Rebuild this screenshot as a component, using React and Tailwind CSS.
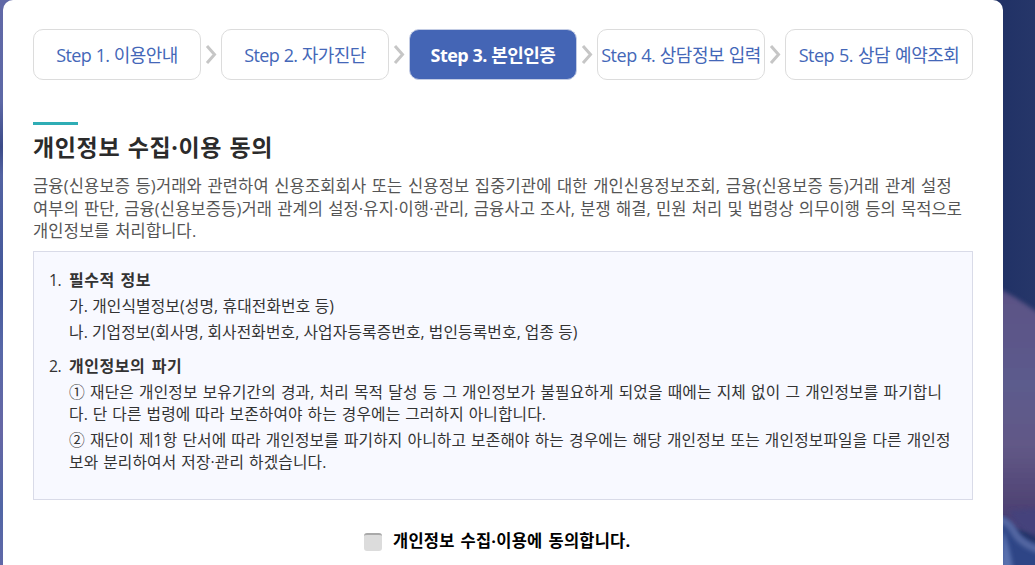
import React, { useState } from 'react';

const steps = [
  { id: 1, label: 'Step 1. 이용안내', width: 'w-[168px]', spacing: 'tracking-[-0.6px] [word-spacing:0.3px]' },
  { id: 2, label: 'Step 2. 자가진단', width: 'w-[168px]', spacing: 'tracking-[-0.6px] [word-spacing:0.3px]' },
  { id: 3, label: 'Step 3. 본인인증', width: 'w-[168px]', spacing: 'tracking-[-0.55px] [word-spacing:0.3px]' },
  { id: 4, label: 'Step 4. 상담정보 입력', width: 'w-[168px]', spacing: 'tracking-[-0.5px] [word-spacing:0.4px]' },
  { id: 5, label: 'Step 5. 상담 예약조회', width: 'w-[188px]', spacing: 'tracking-[-0.5px] [word-spacing:0.8px]' },
];

// 단계 사이 화살표
const StepArrow = () => (
  <svg className="w-5 h-[51px] shrink-0" viewBox="0 0 20 51" fill="none">
    <path d="M6 17 L13.5 25.5 L6 34" stroke="#c6c6c6" strokeWidth="3" />
  </svg>
);

// 상단 단계 표시
const StepBar = ({ current }) => (
  <ol className="flex">
    {steps.map((step) => (
      <li key={step.id} className="flex">
        {step.id > 1 && <StepArrow />}
        <div
          className={`${step.width} ${step.spacing} h-[51px] flex items-center justify-center rounded-[10px] border text-lg whitespace-nowrap ${
            step.id === current
              ? 'bg-[#4465b5] border-[#c3cce4] text-white font-bold'
              : 'bg-white border-[#dcdcdc] text-[#4467b8]'
          }`}
        >
          {step.label}
        </div>
      </li>
    ))}
  </ol>
);

// 본문 배경
const Background = () => (
  <svg className="absolute inset-0 w-full h-full" viewBox="0 0 1035 565" preserveAspectRatio="none">
    <defs>
      <linearGradient id="left" x1="0" y1="0" x2="0" y2="1">
        <stop offset="0" stopColor="#6169a7" />
        <stop offset="0.18" stopColor="#5d68a6" />
        <stop offset="0.26" stopColor="#3c4b88" />
        <stop offset="0.31" stopColor="#5363a2" />
        <stop offset="0.5" stopColor="#44589a" />
        <stop offset="0.62" stopColor="#5868a8" />
        <stop offset="0.76" stopColor="#6667a5" />
        <stop offset="0.9" stopColor="#5166a5" />
        <stop offset="1" stopColor="#6068a8" />
      </linearGradient>
      <linearGradient id="right" x1="0" y1="0" x2="1" y2="0">
        <stop offset="0" stopColor="#1d2f64" />
        <stop offset="1" stopColor="#263669" />
      </linearGradient>
      <linearGradient id="blob" x1="0" y1="0" x2="0" y2="1">
        <stop offset="0" stopColor="#5c5285" />
        <stop offset="0.4" stopColor="#5c5b8d" />
        <stop offset="0.65" stopColor="#625987" />
        <stop offset="0.9" stopColor="#4f4374" />
        <stop offset="1" stopColor="#453f77" />
      </linearGradient>
      <filter id="soft">
        <feGaussianBlur stdDeviation="2" />
      </filter>
    </defs>
    <rect width="20" height="565" fill="url(#left)" />
    <rect x="980" width="55" height="565" fill="url(#right)" />
    <path d="M990 285 Q1015 295 1045 318 V530 H990 Z" fill="url(#blob)" filter="url(#soft)" />
    <path d="M990 518 Q1003 514 1010 524 Q1022 542 1045 546 V580 H990 Z" fill="#2f4486" filter="url(#soft)" />
    <path d="M1010 511 Q1018 534 1045 538 V508 Z" fill="#44427c" filter="url(#soft)" />
    <path d="M996 519 Q1008 519 1016 535 Q1024 546 1045 552" stroke="#5468a3" strokeWidth="7" fill="none" filter="url(#soft)" />
    <path d="M1014 575 Q1010 545 1003 530 L1000 575 Z" fill="#5870ad" filter="url(#soft)" />
  </svg>
);

function App() {
  const [agreed, setAgreed] = useState(false);

  return (
    <div className="relative h-[565px] overflow-hidden bg-[#1f3166] font-['Open_Sans','Noto_Sans_CJK_KR',sans-serif]">
      <Background />

      <main className="relative ml-[3px] w-[1000px] h-full rounded-t-[10px] bg-white px-[30px] pt-[29px]">
        <StepBar current={3} />

        {/* 제목 */}
        <div className="mt-[42px] w-[45px] h-[3px] bg-[#2fadb5]" />
        <h2 className="mt-[6px] h-[32px] leading-[32px] text-[23px] font-bold tracking-[0.65px] [word-spacing:0.8px] text-[#2b2b2b] whitespace-nowrap">
          개인정보 수집·이용 동의
        </h2>

        <div className="mt-3 text-[16.5px] leading-[22.5px] text-[#555] whitespace-nowrap">
          <p className="tracking-[0.15px] [word-spacing:1.1px]">금융(신용보증 등)거래와 관련하여 신용조회회사 또는 신용정보 집중기관에 대한 개인신용정보조회, 금융(신용보증 등)거래 관계 설정</p>
          <p className="tracking-[0.15px] [word-spacing:0.6px]">여부의 판단, 금융(신용보증등)거래 관계의 설정·유지·이행·관리, 금융사고 조사, 분쟁 해결, 민원 처리 및 법령상 의무이행 등의 목적으로</p>
          <p className="tracking-[0.15px] [word-spacing:1.2px]">개인정보를 처리합니다.</p>
        </div>

        {/* 약관 내용 */}
        <section className="mt-[8px] w-[940px] h-[249px] border border-[#d9dbe8] bg-[#f8f9ff] pl-[15px] pt-[17px] text-[15.75px] leading-[22px] tracking-[0.15px] text-[#333] whitespace-nowrap">
          <div className="flex">
            <span className="w-5 tracking-[-0.4px]">1.</span>
            <div>
              <h3 className="text-base leading-[22px] font-bold tracking-[0.5px] [word-spacing:1.2px]">필수적 정보</h3>
              <p className="mt-1">가. 개인식별정보(성명, 휴대전화번호 등)</p>
              <p className="mt-1 [word-spacing:-0.25px]">나. 기업정보(회사명, 회사전화번호, 사업자등록증번호, 법인등록번호, 업종 등)</p>
            </div>
          </div>
          <div className="flex mt-3">
            <span className="w-5 tracking-[-0.4px]">2.</span>
            <div>
              <h3 className="text-base leading-[22px] font-bold tracking-[0.5px] [word-spacing:2px]">개인정보의 파기</h3>
              <p className="mt-1 [word-spacing:0.85px]">① 재단은 개인정보 보유기간의 경과, 처리 목적 달성 등 그 개인정보가 불필요하게 되었을 때에는 지체 없이 그 개인정보를 파기합니</p>
              <p className="[word-spacing:0.65px]">다. 단 다른 법령에 따라 보존하여야 하는 경우에는 그러하지 아니합니다.</p>
              <p className="mt-1 [word-spacing:0.8px]">② 재단이 제1항 단서에 따라 개인정보를 파기하지 아니하고 보존해야 하는 경우에는 해당 개인정보 또는 개인정보파일을 다른 개인정</p>
              <p className="[word-spacing:0.65px]">보와 분리하여서 저장·관리 하겠습니다.</p>
            </div>
          </div>
        </section>

        {/* 동의 체크 */}
        <label className="mt-[31px] ml-[331px] flex items-center h-[22px] cursor-pointer">
          <input
            type="checkbox"
            checked={agreed}
            onChange={() => setAgreed(!agreed)}
            className="appearance-none w-[18px] h-[18px] rounded-[3px] border-t-2 border-[#a9a9a9] bg-[#dcdcdc] checked:bg-[#4465b5]"
          />
          <span className="ml-[11px] text-[16.5px] font-bold tracking-[0.2px] [word-spacing:1.6px] text-black whitespace-nowrap">개인정보 수집·이용에 동의합니다.</span>
        </label>
      </main>
    </div>
  );
}

export default App;
